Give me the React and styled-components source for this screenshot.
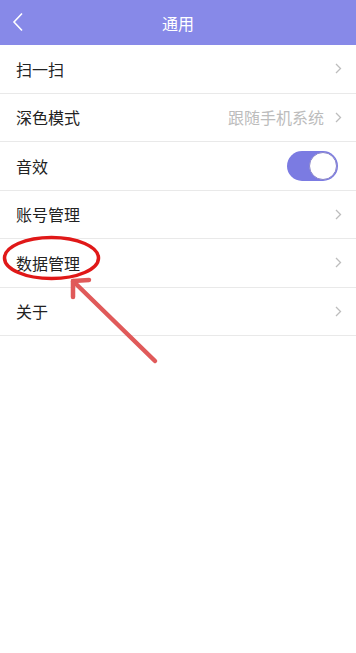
import styled, { createGlobalStyle } from "styled-components";

const GlobalStyle = createGlobalStyle`
  html, body {
    margin: 0;
    padding: 0;
    background: #fff;
  }
  body {
    font-family: "Noto Sans CJK SC", "Noto Sans", sans-serif;
  }
`;

const items = [
  { label: "扫一扫" },
  { label: "深色模式", value: "跟随手机系统" },
  { label: "音效", toggle: true },
  { label: "账号管理" },
  { label: "数据管理" },
  { label: "关于" },
];

function Chevron() {
  return (
    <svg width="7" height="11" viewBox="0 0 7 11">
      <path d="M1 1l4.5 4.5L1 10" fill="none" stroke="#bdbdbd" strokeWidth="1.3" />
    </svg>
  );
}

function App() {
  return (
    <>
      <GlobalStyle />
      <Page>
        <Header>
          <Back>
            <svg width="12" height="20" viewBox="0 0 12 20">
              <path d="M10 1.5L2 10l8 8.5" fill="none" stroke="#fff" strokeWidth="1.6" />
            </svg>
          </Back>
          <Title>通用</Title>
        </Header>
        <List>
          {items.map((it) => (
            <Row key={it.label}>
              <Label>{it.label}</Label>
              <Right>
                {it.value && <Value>{it.value}</Value>}
                {it.toggle ? (
                  <Toggle>
                    <Knob />
                  </Toggle>
                ) : (
                  <Chevron />
                )}
              </Right>
            </Row>
          ))}
        </List>
        <Annotation width="356" height="653" viewBox="0 0 356 653">
          <ellipse cx="51.5" cy="258" rx="47" ry="20.5" fill="none" stroke="#e01818" strokeWidth="3.5" />
          <g stroke="#e05a5a" strokeWidth="4.5" strokeLinecap="round" fill="none">
            <path d="M155 361L74 282" />
            <path d="M73 281L89 280" />
            <path d="M73 281L73 297" />
          </g>
        </Annotation>
      </Page>
    </>
  );
}

const Page = styled.div`
  position: relative;
  width: 356px;
  height: 653px;
  background: #fff;
  overflow: hidden;
`;

const Header = styled.div`
  height: 45px;
  background: #8789e8;
  display: flex;
  align-items: center;
  justify-content: center;
  position: relative;
`;

const Back = styled.div`
  position: absolute;
  left: 12px;
  top: 12px;
  display: flex;
`;

const Title = styled.div`
  color: #fff;
  font-size: 16px;
`;

const List = styled.div`
  display: flex;
  flex-direction: column;
`;

const Row = styled.div`
  height: 48.5px;
  box-sizing: border-box;
  border-bottom: 1px solid #e9e9e9;
  display: flex;
  align-items: center;
  justify-content: space-between;
  padding: 0 14px 0 16px;
`;

const Label = styled.div`
  font-size: 16px;
  color: #222;
`;

const Right = styled.div`
  display: flex;
  align-items: center;
  gap: 11px;
`;

const Value = styled.div`
  font-size: 16px;
  color: #bcbcbc;
`;

const Toggle = styled.div`
  width: 51px;
  height: 30px;
  border-radius: 15px;
  background: #7b7be2;
  display: flex;
  align-items: center;
  justify-content: flex-end;
  padding: 1px;
  box-sizing: border-box;
  margin-right: 4px;
`;

const Knob = styled.div`
  width: 28px;
  height: 28px;
  border-radius: 50%;
  background: #fff;
  box-sizing: border-box;
  border: 1px solid #8a86c8;
`;

const Annotation = styled.svg`
  position: absolute;
  left: 0;
  top: 0;
  pointer-events: none;
`;

export default App;
